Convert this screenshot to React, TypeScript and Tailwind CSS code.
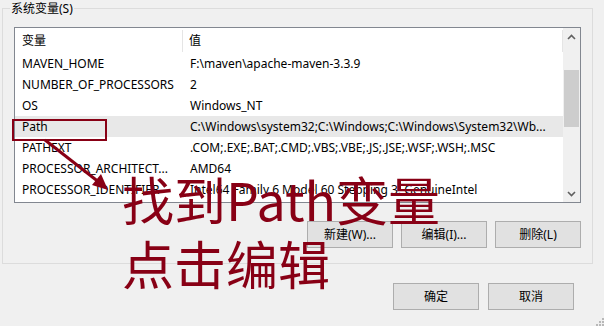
import React from "react";

const rows = [
  { name: "MAVEN_HOME", value: "F:\\maven\\apache-maven-3.3.9" },
  { name: "NUMBER_OF_PROCESSORS", value: "2" },
  { name: "OS", value: "Windows_NT" },
  {
    name: "Path",
    value: "C:\\Windows\\system32;C:\\Windows;C:\\Windows\\System32\\Wb...",
    selected: true,
  },
  { name: "PATHEXT", value: ".COM;.EXE;.BAT;.CMD;.VBS;.VBE;.JS;.JSE;.WSF;.WSH;.MSC" },
  { name: "PROCESSOR_ARCHITECT...", value: "AMD64" },
  { name: "PROCESSOR_IDENTIFIER", value: "Intel64 Family 6 Model 60 Stepping 3, GenuineIntel" },
];

function WinButton({ children }: { children: React.ReactNode }) {
  return (
    <button className="w-[86px] h-[27px] bg-[#e1e1e1] border border-[#adadad] text-[12px] text-black flex items-center justify-center">
      {children}
    </button>
  );
}

export default function App() {
  return (
    <div
      className="relative w-[604px] h-[326px] bg-[#f0f0f0] overflow-hidden text-[12px] text-black"
      style={{ fontFamily: '"Noto Sans", "Noto Sans CJK SC", sans-serif' }}
    >
      {/* System variables group */}
      <div className="ml-[2px] mt-[8px] w-[591px] border border-[#dcdcdc] pb-[15px]">
        <div className="-mt-[9px] ml-[7px] w-fit px-[1px] bg-[#f0f0f0] leading-[17px]">
          系统变量(S)
        </div>

        <div className="ml-[11px] mt-[10px] w-[567px] h-[176px] border border-[#828790] bg-white flex">
          <div className="flex-1 flex flex-col">
            {/* header */}
            <div className="h-[25px] flex items-center">
              <div className="w-[168px] pl-[7px] border-r border-[#e5e5e5] h-[22px] flex items-center">
                变量
              </div>
              <div className="flex-1 pl-[6px] h-[22px] flex items-center border-r border-[#e5e5e5]">值</div>
            </div>
            {rows.map((r) => (
              <div
                key={r.name}
                className={`h-[21px] flex items-center whitespace-nowrap overflow-hidden ${
                  r.selected ? "bg-[#e8e8e8]" : ""
                }`}
              >
                <div className="w-[168px] pl-[7px] overflow-hidden">{r.name}</div>
                <div className="flex-1 pl-[7px] overflow-hidden">{r.value}</div>
              </div>
            ))}
          </div>

          {/* scrollbar */}
          <div className="w-[17px] bg-[#f0f0f0] flex flex-col">
            <div className="h-[17px] flex items-center justify-center">
              <svg width="9" height="6" viewBox="0 0 9 6">
                <path d="M1 5 L4.5 1.5 L8 5" fill="none" stroke="#606060" strokeWidth="1.6" />
              </svg>
            </div>
            <div className="mt-[25px] mx-[1px] h-[57px] bg-[#cdcdcd]" />
            <div className="flex-1" />
            <div className="h-[17px] flex items-center justify-center">
              <svg width="9" height="6" viewBox="0 0 9 6">
                <path d="M1 1 L4.5 4.5 L8 1" fill="none" stroke="#606060" strokeWidth="1.6" />
              </svg>
            </div>
          </div>
        </div>

        <div className="mt-[18px] mr-[11px] flex justify-end gap-2">
          <WinButton>新建(W)...</WinButton>
          <WinButton>编辑(I)...</WinButton>
          <WinButton>删除(L)</WinButton>
        </div>
      </div>

      <div className="mt-[19px] mr-[30px] flex justify-end gap-[9px]">
        <WinButton>确定</WinButton>
        <WinButton>取消</WinButton>
      </div>

      {/* resize grip */}
      <svg className="absolute right-0 bottom-0" width="8" height="8" viewBox="0 0 8 8">
        {[
          [6, 0],
          [6, 3],
          [3, 3],
          [6, 6],
          [3, 6],
          [0, 6],
        ].map(([x, y]) => (
          <rect key={`${x}-${y}`} x={x} y={y} width="2" height="2" fill="#b8b8b8" />
        ))}
      </svg>

      {/* annotation overlay */}
      <svg className="absolute left-0 top-0 pointer-events-none" width="604" height="326">
        <rect x="13" y="120" width="93" height="20" fill="none" stroke="#880015" strokeWidth="2" />
        <line x1="45" y1="140" x2="100" y2="183" stroke="#880015" strokeWidth="3" />
        <polygon points="108,190 92,185 101,174" fill="#880015" />
      </svg>
      <div
        className="absolute left-[122px] top-[167px] text-[52px] leading-[64px] text-[#880015] whitespace-nowrap"
        style={{ fontFamily: '"Noto Sans CJK SC", sans-serif' }}
      >
        <div>找到Path变量</div>
        <div>点击编辑</div>
      </div>
    </div>
  );
}
